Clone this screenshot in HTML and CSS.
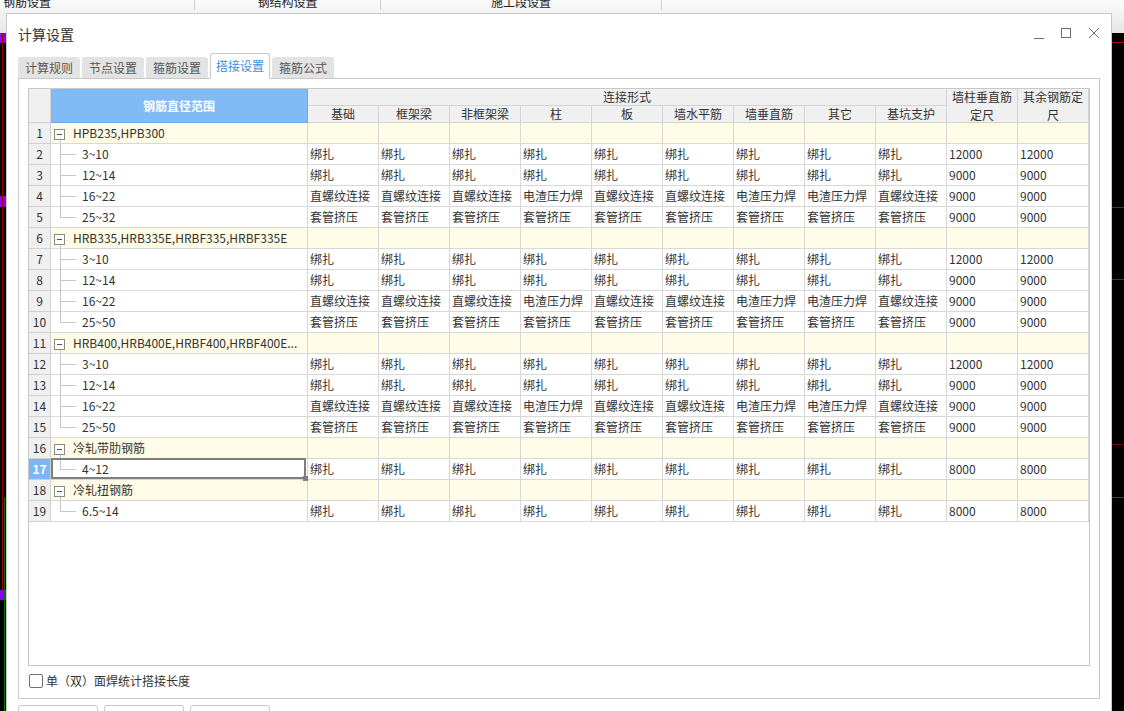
FILE: index.html
```html
<!DOCTYPE html>
<html lang="zh-CN">
<head>
<meta charset="utf-8">
<title>计算设置</title>
<link rel="stylesheet" href="styles.css">
</head>
<body>
<div class="screen">
  <div class="topbar">
    <div class="top-item first">钢筋设置</div>
    <div class="top-item mid">钢结构设置</div>
    <div class="top-item wide">施工段设置</div>
  </div>
  <div class="canvas">
    <span class="mark purple pa"></span>
    <span class="mark purple pb"></span>
    <span class="mark purple pc"></span>
    <span class="mark vred"></span>
    <span class="mark vgreen"></span>
    <span class="mark hl r1"></span>
    <span class="mark hl r2"></span>
    <span class="mark hl r3"></span>
    <span class="mark hl r4"></span>
    <span class="mark hl g1"></span>
  </div>

  <div class="dialog">
    <div class="titlebar">
      <div class="title">计算设置</div>
      <svg class="winctl" width="70" height="15" viewBox="0 0 70 15">
        <line x1="3" y1="12.5" x2="13" y2="12.5" stroke="#6e6e6e" stroke-width="1"/>
        <rect x="30.5" y="2.5" width="9" height="9" fill="none" stroke="#6e6e6e" stroke-width="1"/>
        <path d="M58 2 L68 12 M68 2 L58 12" stroke="#6e6e6e" stroke-width="1" fill="none"/>
      </svg>
    </div>
    <div class="tabs">
      <div class="tab">计算规则</div>
      <div class="tab">节点设置</div>
      <div class="tab">箍筋设置</div>
      <div class="tab active">搭接设置</div>
      <div class="tab">箍筋公式</div>
    </div>
    <div class="panel">
      <div class="gridbox">
        <div class="grid">
          <div class="hc corner"></div>
          <div class="hc namehead">钢筋直径范围</div>
          <div class="hc span9">连接形式</div>
          <div class="hc tall">墙柱垂直筋定尺</div>
          <div class="hc tall">其余钢筋定尺</div>
          <div class="hc">基础</div>
          <div class="hc">框架梁</div>
          <div class="hc">非框架梁</div>
          <div class="hc">柱</div>
          <div class="hc">板</div>
          <div class="hc">墙水平筋</div>
          <div class="hc">墙垂直筋</div>
          <div class="hc">其它</div>
          <div class="hc">基坑支护</div>

          <!-- group 1 -->
          <div class="row grp">
            <div class="c rn">1</div>
            <div class="c nm gn"><span class="exp"></span><span class="nt">HPB235,HPB300</span></div>
            <div class="c"></div><div class="c"></div><div class="c"></div><div class="c"></div><div class="c"></div><div class="c"></div><div class="c"></div><div class="c"></div><div class="c"></div><div class="c"></div><div class="c"></div>
          </div>
          <div class="row">
            <div class="c rn">2</div>
            <div class="c nm ch">3~10</div>
            <div class="c">绑扎</div><div class="c">绑扎</div><div class="c">绑扎</div><div class="c">绑扎</div><div class="c">绑扎</div><div class="c">绑扎</div><div class="c">绑扎</div><div class="c">绑扎</div><div class="c">绑扎</div>
            <div class="c">12000</div><div class="c">12000</div>
          </div>
          <div class="row">
            <div class="c rn">3</div>
            <div class="c nm ch">12~14</div>
            <div class="c">绑扎</div><div class="c">绑扎</div><div class="c">绑扎</div><div class="c">绑扎</div><div class="c">绑扎</div><div class="c">绑扎</div><div class="c">绑扎</div><div class="c">绑扎</div><div class="c">绑扎</div>
            <div class="c">9000</div><div class="c">9000</div>
          </div>
          <div class="row">
            <div class="c rn">4</div>
            <div class="c nm ch">16~22</div>
            <div class="c">直螺纹连接</div><div class="c">直螺纹连接</div><div class="c">直螺纹连接</div><div class="c">电渣压力焊</div><div class="c">直螺纹连接</div><div class="c">直螺纹连接</div><div class="c">电渣压力焊</div><div class="c">电渣压力焊</div><div class="c">直螺纹连接</div>
            <div class="c">9000</div><div class="c">9000</div>
          </div>
          <div class="row">
            <div class="c rn">5</div>
            <div class="c nm ch last">25~32</div>
            <div class="c">套管挤压</div><div class="c">套管挤压</div><div class="c">套管挤压</div><div class="c">套管挤压</div><div class="c">套管挤压</div><div class="c">套管挤压</div><div class="c">套管挤压</div><div class="c">套管挤压</div><div class="c">套管挤压</div>
            <div class="c">9000</div><div class="c">9000</div>
          </div>

          <!-- group 2 -->
          <div class="row grp">
            <div class="c rn">6</div>
            <div class="c nm gn"><span class="exp"></span><span class="nt">HRB335,HRB335E,HRBF335,HRBF335E</span></div>
            <div class="c"></div><div class="c"></div><div class="c"></div><div class="c"></div><div class="c"></div><div class="c"></div><div class="c"></div><div class="c"></div><div class="c"></div><div class="c"></div><div class="c"></div>
          </div>
          <div class="row">
            <div class="c rn">7</div>
            <div class="c nm ch">3~10</div>
            <div class="c">绑扎</div><div class="c">绑扎</div><div class="c">绑扎</div><div class="c">绑扎</div><div class="c">绑扎</div><div class="c">绑扎</div><div class="c">绑扎</div><div class="c">绑扎</div><div class="c">绑扎</div>
            <div class="c">12000</div><div class="c">12000</div>
          </div>
          <div class="row">
            <div class="c rn">8</div>
            <div class="c nm ch">12~14</div>
            <div class="c">绑扎</div><div class="c">绑扎</div><div class="c">绑扎</div><div class="c">绑扎</div><div class="c">绑扎</div><div class="c">绑扎</div><div class="c">绑扎</div><div class="c">绑扎</div><div class="c">绑扎</div>
            <div class="c">9000</div><div class="c">9000</div>
          </div>
          <div class="row">
            <div class="c rn">9</div>
            <div class="c nm ch">16~22</div>
            <div class="c">直螺纹连接</div><div class="c">直螺纹连接</div><div class="c">直螺纹连接</div><div class="c">电渣压力焊</div><div class="c">直螺纹连接</div><div class="c">直螺纹连接</div><div class="c">电渣压力焊</div><div class="c">电渣压力焊</div><div class="c">直螺纹连接</div>
            <div class="c">9000</div><div class="c">9000</div>
          </div>
          <div class="row">
            <div class="c rn">10</div>
            <div class="c nm ch last">25~50</div>
            <div class="c">套管挤压</div><div class="c">套管挤压</div><div class="c">套管挤压</div><div class="c">套管挤压</div><div class="c">套管挤压</div><div class="c">套管挤压</div><div class="c">套管挤压</div><div class="c">套管挤压</div><div class="c">套管挤压</div>
            <div class="c">9000</div><div class="c">9000</div>
          </div>

          <!-- group 3 -->
          <div class="row grp">
            <div class="c rn">11</div>
            <div class="c nm gn"><span class="exp"></span><span class="nt">HRB400,HRB400E,HRBF400,HRBF400E...</span></div>
            <div class="c"></div><div class="c"></div><div class="c"></div><div class="c"></div><div class="c"></div><div class="c"></div><div class="c"></div><div class="c"></div><div class="c"></div><div class="c"></div><div class="c"></div>
          </div>
          <div class="row">
            <div class="c rn">12</div>
            <div class="c nm ch">3~10</div>
            <div class="c">绑扎</div><div class="c">绑扎</div><div class="c">绑扎</div><div class="c">绑扎</div><div class="c">绑扎</div><div class="c">绑扎</div><div class="c">绑扎</div><div class="c">绑扎</div><div class="c">绑扎</div>
            <div class="c">12000</div><div class="c">12000</div>
          </div>
          <div class="row">
            <div class="c rn">13</div>
            <div class="c nm ch">12~14</div>
            <div class="c">绑扎</div><div class="c">绑扎</div><div class="c">绑扎</div><div class="c">绑扎</div><div class="c">绑扎</div><div class="c">绑扎</div><div class="c">绑扎</div><div class="c">绑扎</div><div class="c">绑扎</div>
            <div class="c">9000</div><div class="c">9000</div>
          </div>
          <div class="row">
            <div class="c rn">14</div>
            <div class="c nm ch">16~22</div>
            <div class="c">直螺纹连接</div><div class="c">直螺纹连接</div><div class="c">直螺纹连接</div><div class="c">电渣压力焊</div><div class="c">直螺纹连接</div><div class="c">直螺纹连接</div><div class="c">电渣压力焊</div><div class="c">电渣压力焊</div><div class="c">直螺纹连接</div>
            <div class="c">9000</div><div class="c">9000</div>
          </div>
          <div class="row">
            <div class="c rn">15</div>
            <div class="c nm ch last">25~50</div>
            <div class="c">套管挤压</div><div class="c">套管挤压</div><div class="c">套管挤压</div><div class="c">套管挤压</div><div class="c">套管挤压</div><div class="c">套管挤压</div><div class="c">套管挤压</div><div class="c">套管挤压</div><div class="c">套管挤压</div>
            <div class="c">9000</div><div class="c">9000</div>
          </div>

          <!-- group 4 -->
          <div class="row grp">
            <div class="c rn">16</div>
            <div class="c nm gn"><span class="exp"></span><span class="nt">冷轧带肋钢筋</span></div>
            <div class="c"></div><div class="c"></div><div class="c"></div><div class="c"></div><div class="c"></div><div class="c"></div><div class="c"></div><div class="c"></div><div class="c"></div><div class="c"></div><div class="c"></div>
          </div>
          <div class="row">
            <div class="c rn selrn">17</div>
            <div class="c nm ch last">4~12<span class="selframe"></span></div>
            <div class="c">绑扎</div><div class="c">绑扎</div><div class="c">绑扎</div><div class="c">绑扎</div><div class="c">绑扎</div><div class="c">绑扎</div><div class="c">绑扎</div><div class="c">绑扎</div><div class="c">绑扎</div>
            <div class="c">8000</div><div class="c">8000</div>
          </div>

          <!-- group 5 -->
          <div class="row grp">
            <div class="c rn">18</div>
            <div class="c nm gn"><span class="exp"></span><span class="nt">冷轧扭钢筋</span></div>
            <div class="c"></div><div class="c"></div><div class="c"></div><div class="c"></div><div class="c"></div><div class="c"></div><div class="c"></div><div class="c"></div><div class="c"></div><div class="c"></div><div class="c"></div>
          </div>
          <div class="row">
            <div class="c rn">19</div>
            <div class="c nm ch last">6.5~14</div>
            <div class="c">绑扎</div><div class="c">绑扎</div><div class="c">绑扎</div><div class="c">绑扎</div><div class="c">绑扎</div><div class="c">绑扎</div><div class="c">绑扎</div><div class="c">绑扎</div><div class="c">绑扎</div>
            <div class="c">8000</div><div class="c">8000</div>
          </div>
        </div>
      </div>
      <div class="check-row">
        <span class="cb"></span>
        <span class="cb-label">单（双）面焊统计搭接长度</span>
      </div>
    </div>
    <div class="buttons">
      <div class="btn"></div>
      <div class="btn"></div>
      <div class="btn"></div>
    </div>
  </div>
</div>
</body>
</html>
```

FILE: styles.css
```css
* { box-sizing: border-box; }

html, body {
  margin: 0;
  padding: 0;
}

body {
  width: 1124px;
  height: 711px;
  overflow: hidden;
  background: #000;
  font-family: "Noto Sans CJK SC", "Microsoft YaHei", sans-serif;
  font-size: 12px;
  color: #333;
}

.screen {
  position: relative;
  width: 1124px;
  height: 711px;
  display: flex;
  flex-direction: column;
}

/* background application top bar */
.topbar {
  height: 33px;
  flex: none;
  display: flex;
  align-items: flex-start;
  overflow: hidden;
  background: linear-gradient(#fbfbfb, #e6e6e6);
}

.top-item {
  height: 16px;
  margin-top: -6px;
  line-height: 16px;
  font-size: 12px;
  color: #222;
  text-align: center;
  border-right: 1px solid #cfcfcf;
}

.top-item.first { width: 195px; text-align: left; padding-left: 3px; }
.top-item.mid { width: 186px; }
.top-item.wide { width: 281px; }

/* black drawing canvas behind the dialog */
.canvas {
  flex: 1;
  position: relative;
  background: #000;
}

.mark { position: absolute; display: block; }
.purple { left: 0; width: 10px; background: #8b00f5; }
.pa { top: 0; height: 10px; }
.pb { top: 163px; height: 11px; }
.pc { top: 557px; height: 10px; }
.vred { left: 2px; top: 0; width: 1px; height: 557px; background: #9a0000; }
.vgreen { left: 4px; top: 464px; width: 1px; bottom: 0; background: #0b6b0b; }
.hl { left: 1100px; width: 24px; height: 1px; }
.r1 { top: 9px; background: #c00000; }
.r2 { top: 174px; background: #c00000; }
.r3 { top: 246px; background: #c00000; }
.r4 { top: 411px; background: #7a0000; }
.g1 { top: 464px; background: #0b6b0b; }

/* dialog window */
.dialog {
  position: absolute;
  left: 6px;
  top: 13px;
  width: 1106px;
  height: 730px;
  background: #fff;
  border: 1px solid #c9c9c9;
  display: flex;
  flex-direction: column;
}

.titlebar {
  height: 39px;
  flex: none;
  display: flex;
  align-items: center;
  padding: 0 10px 0 11px;
}

.title {
  font-size: 14px;
  color: #333;
}

.winctl {
  margin-left: auto;
  display: block;
}

.tabs {
  height: 25px;
  flex: none;
  display: flex;
  align-items: flex-end;
  gap: 2px;
  padding-left: 11px;
  position: relative;
  z-index: 1;
}

.tab {
  height: 21px;
  line-height: 21px;
  padding: 0 7px;
  background: #e3e3e3;
  color: #555;
  border-radius: 3px 3px 0 0;
}

.tab.active {
  height: 26px;
  margin-bottom: -1px;
  line-height: 24px;
  padding: 0 5px;
  background: #fff;
  color: #3b8de0;
  border: 1px solid #c8c8c8;
  border-bottom: none;
}

.panel {
  flex: none;
  height: 621px;
  margin: 0 11px;
  border: 1px solid #c9c9c9;
  padding: 9px 9px 10px;
  display: flex;
  flex-direction: column;
}

.gridbox {
  height: 578px;
  flex: none;
  border: 1px solid #c8c8c8;
  overflow: hidden;
  background: #fff;
}

/* spreadsheet grid */
.grid {
  display: grid;
  grid-template-columns: 22px 257px repeat(11, 71px);
  grid-template-rows: 17px 17px;
  grid-auto-rows: 21px;
}

.row { display: contents; }

.hc {
  background: #f0f0f0;
  border-right: 1px solid #d3d3d3;
  border-bottom: 1px solid #d3d3d3;
  display: flex;
  align-items: center;
  justify-content: center;
  text-align: center;
  line-height: 16px;
  color: #333;
  white-space: nowrap;
}

.hc.corner { grid-row: span 2; }

.hc.namehead {
  grid-row: span 2;
  background: #80bbf8;
  border-right-color: #6aa9ee;
  border-bottom-color: #6aa9ee;
  color: #fff;
  font-weight: bold;
}

.hc.span9 { grid-column: span 9; }

.hc.tall {
  grid-row: span 2;
  white-space: normal;
  line-height: 18px;
  padding: 0 1px;
}

.c {
  border-right: 1px solid #d8d8d8;
  border-bottom: 1px solid #d8d8d8;
  line-height: 20px;
  padding-left: 2px;
  white-space: nowrap;
  overflow: hidden;
  color: #333;
  background: #fff;
}

.grp > .c { background: #fefbe6; }

.c.rn,
.grp > .c.rn {
  background: #f0f0f0;
  border-right-color: #d0d0d0;
  border-bottom-color: #d0d0d0;
  text-align: center;
  padding: 0;
}

.c.rn.selrn {
  background: #7ab8f5;
  color: #fff;
  font-weight: bold;
}

/* tree column */
.nm {
  position: relative;
  overflow: visible;
}

.nm.gn {
  display: flex;
  align-items: flex-start;
  padding-left: 3px;
  overflow: hidden;
}

.nm.gn::after {
  content: "";
  position: absolute;
  left: 9px;
  top: 17px;
  bottom: 0;
  width: 1px;
  background: #c8c8c8;
}

.exp {
  flex: none;
  width: 11px;
  height: 11px;
  margin-top: 6px;
  margin-right: 8px;
  border: 1px solid #8a8a8a;
  position: relative;
  background: #fff;
}

.exp::before {
  content: "";
  position: absolute;
  left: 2px;
  right: 2px;
  top: 4px;
  height: 1px;
  background: #555;
}

.nt {
  overflow: hidden;
  white-space: nowrap;
}

.nm.ch { padding-left: 31px; }

.nm.ch::before {
  content: "";
  position: absolute;
  left: 9px;
  top: 0;
  bottom: -1px;
  width: 1px;
  background: #c8c8c8;
}

.nm.ch.last::before {
  bottom: auto;
  height: 11px;
}

.nm.ch::after {
  content: "";
  position: absolute;
  left: 9px;
  top: 10px;
  width: 16px;
  height: 1px;
  background: #c8c8c8;
}

.selframe {
  position: absolute;
  left: 0;
  top: -1px;
  right: 1px;
  bottom: 0;
  border: 2px solid #7f7f7f;
  z-index: 2;
}

.selframe::after {
  content: "";
  position: absolute;
  right: -4px;
  bottom: -4px;
  width: 5px;
  height: 5px;
  background: #7f7f7f;
}

/* checkbox row */
.check-row {
  margin-top: 8px;
  height: 14px;
  display: flex;
  align-items: center;
  gap: 3px;
  padding-left: 1px;
}

.cb {
  width: 14px;
  height: 14px;
  flex: none;
  border: 1px solid #707070;
  border-radius: 2px;
  background: #fff;
}

.cb-label {
  font-size: 12px;
  line-height: 14px;
  color: #333;
}

/* dialog buttons */
.buttons {
  display: flex;
  gap: 6px;
  margin: 6px 0 0 11px;
}

.btn {
  width: 80px;
  height: 26px;
  border: 1px solid #c8c8c8;
  border-radius: 3px;
  background: #fff;
}
```
